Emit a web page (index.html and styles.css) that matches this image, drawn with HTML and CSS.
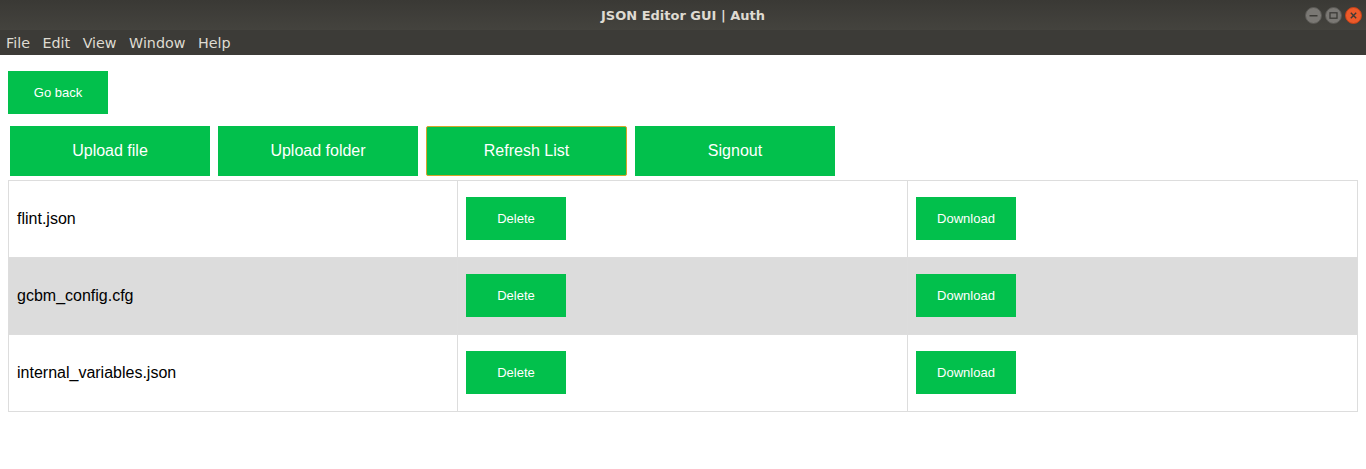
FILE: index.html
```html
<!DOCTYPE html>
<html>
<head>
<meta charset="utf-8">
<title>JSON Editor GUI | Auth</title>
<link rel="stylesheet" href="styles.css">
</head>
<body>
<div class="titlebar">
  <span class="title">JSON Editor GUI | Auth</span>
  <div class="wctl">
    <span class="wbtn"><svg width="17" height="17" viewBox="0 0 17 17"><circle cx="8.5" cy="8.5" r="8" fill="#7a7874" stroke="#5a5955" stroke-width="1"/><rect x="4.5" y="8" width="8" height="1.5" fill="#3c3b37"/></svg></span>
    <span class="wbtn"><svg width="17" height="17" viewBox="0 0 17 17"><circle cx="8.5" cy="8.5" r="8" fill="#7a7874" stroke="#5a5955" stroke-width="1"/><rect x="5" y="5.8" width="7" height="5.4" fill="none" stroke="#3c3b37" stroke-width="1.3"/></svg></span>
    <span class="wbtn"><svg width="17" height="17" viewBox="0 0 17 17"><circle cx="8.5" cy="8.5" r="8" fill="#ec5a2a" stroke="#c44117" stroke-width="1"/><path d="M5.8 5.8 L11.2 11.2 M11.2 5.8 L5.8 11.2" stroke="#3c3b37" stroke-width="1.4"/></svg></span>
  </div>
</div>
<div class="menubar">
  <span class="mi">File</span>
  <span class="mi">Edit</span>
  <span class="mi">View</span>
  <span class="mi">Window</span>
  <span class="mi">Help</span>
</div>
<main class="content">
  <button class="btn btn-small back">Go back</button>
  <div class="actions">
    <button class="btn btn-big">Upload file</button>
    <button class="btn btn-big">Upload folder</button>
    <button class="btn btn-big focused">Refresh List</button>
    <button class="btn btn-big">Signout</button>
  </div>
  <table class="files">
    <colgroup>
      <col class="c1"><col class="c2"><col class="c3">
    </colgroup>
    <tr>
      <td class="name">flint.json</td>
      <td><button class="btn btn-small">Delete</button></td>
      <td><button class="btn btn-small">Download</button></td>
    </tr>
    <tr class="alt">
      <td class="name">gcbm_config.cfg</td>
      <td><button class="btn btn-small">Delete</button></td>
      <td><button class="btn btn-small">Download</button></td>
    </tr>
    <tr>
      <td class="name">internal_variables.json</td>
      <td><button class="btn btn-small">Delete</button></td>
      <td><button class="btn btn-small">Download</button></td>
    </tr>
  </table>
</main>
</body>
</html>
```
FILE: styles.css
```css
html, body {
  margin: 0;
  padding: 0;
  background: #ffffff;
  font-family: "Liberation Sans", Arial, sans-serif;
}

.titlebar {
  height: 30px;
  background: linear-gradient(to bottom, #3a3935 0%, #44433e 100%);
  display: flex;
  align-items: center;
  justify-content: center;
  position: relative;
}

.title {
  color: #dfdbd2;
  font-family: "DejaVu Sans", sans-serif;
  font-weight: bold;
  font-size: 13px;
}

.wctl {
  position: absolute;
  right: 4px;
  top: 7px;
  display: flex;
  gap: 3px;
}

.wbtn {
  width: 17px;
  height: 17px;
  display: block;
}

.wbtn svg {
  display: block;
}

.menubar {
  height: 25px;
  background: #3c3b37;
  display: flex;
  align-items: center;
  padding-left: 6px;
  gap: 12.5px;
}

.mi {
  color: #dfdbd2;
  font-family: "DejaVu Sans", sans-serif;
  font-size: 14.3px;
  line-height: 25px;
  padding-top: 2px;
}

.content {
  padding: 16px 8px 0 8px;
}

.btn {
  background: #02c04c;
  color: #ffffff;
  border: none;
  border-radius: 0;
  font-family: "Liberation Sans", Arial, sans-serif;
  padding: 0;
  margin: 0;
  cursor: pointer;
  display: block;
}

.btn-small {
  width: 100px;
  height: 43px;
  font-size: 13px;
}

.back {
  margin-bottom: 12px;
}

.actions {
  display: flex;
  gap: 8px;
  padding-left: 2px;
  margin-bottom: 4px;
}

.btn-big {
  width: 200px;
  height: 50px;
  font-size: 16px;
}

.focused {
  width: 201px;
  border: 1px solid #d2a62a;
  border-radius: 2px;
}

.files {
  width: 1350px;
  border-collapse: separate;
  border-spacing: 0;
  border: 1px solid #dddddd;
  border-bottom: none;
  table-layout: fixed;
}

.c1 { width: 448px; }
.c2 { width: 450px; }
.c3 { width: 450px; }

.files td {
  border-bottom: 1px solid #dddddd;
  padding: 16px 8px 17px 8px;
  vertical-align: middle;
  font-size: 16px;
  color: #000000;
}

.files td + td {
  border-left: 1px solid #dddddd;
}

.files tr.alt {
  background: #dcdcdc;
}
```
